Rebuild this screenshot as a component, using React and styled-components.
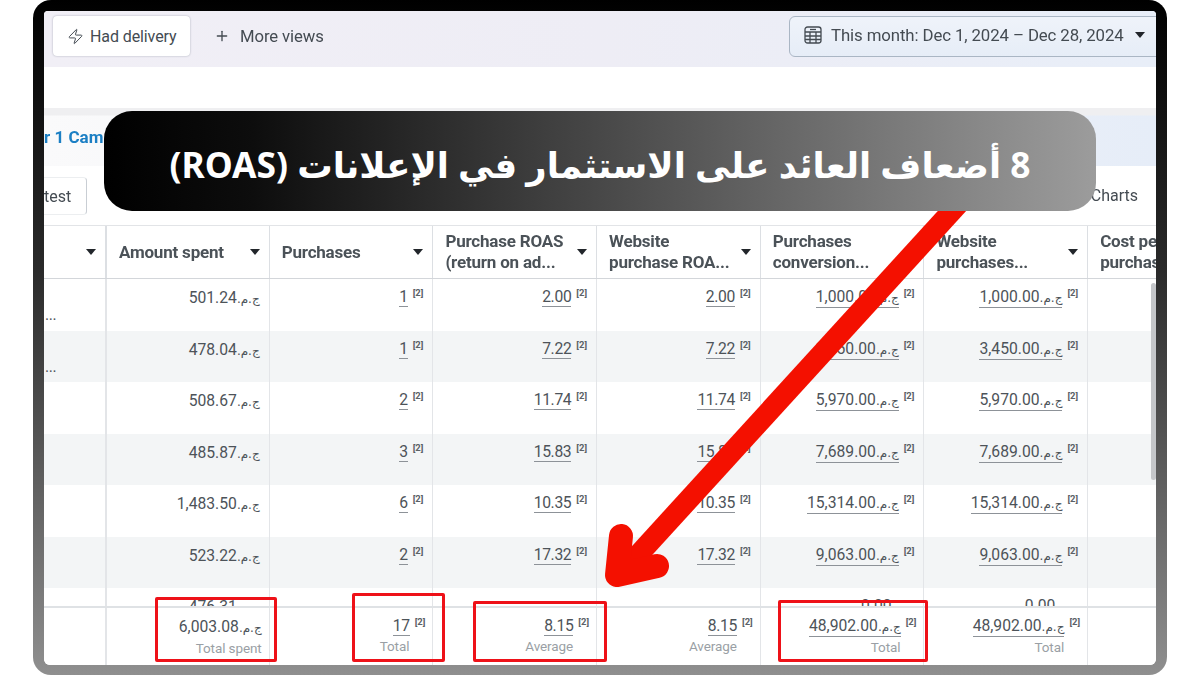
import React from "react";
import styled, { createGlobalStyle } from "styled-components";
import { Plus, Zap } from "lucide-react";

const Global = createGlobalStyle`
  html, body { margin: 0; padding: 0; background: #fff; }
  body { font-family: "Roboto", "Liberation Sans", sans-serif; }
  #root { width: 1200px; height: 675px; overflow: hidden; }
`;

const Stage = styled.div`
  position: relative;
  width: 1200px;
  height: 675px;
  padding: 0 33px;
  box-sizing: border-box;
  background: #fff;
`;
const Frame = styled.div`
  height: 675px;
  box-sizing: border-box;
  padding: 11px 11px 10px;
  border-radius: 18px;
  background: linear-gradient(180deg, #000 0%, #2a2a2a 40%, #8f8f8f 100%);
`;
const Screen = styled.div`
  height: 654px;
  display: flex;
  flex-direction: column;
  overflow: hidden;
  background: #fff;
  border-radius: 4px 4px 6px 6px;
  filter: blur(0.45px);
  color: #444b52;
`;
const Toolbar = styled.div`
  height: 56px;
  flex: none;
  display: flex;
  align-items: center;
  padding: 0 0 6px 9px;
  box-sizing: border-box;
  background: linear-gradient(90deg, #f1eff6 0%, #eeedf5 50%, #e8eef8 100%);
  font-size: 16px;
  letter-spacing: -0.1px;
`;
const ViewButton = styled.div`
  width: 137px;
  height: 40px;
  box-sizing: border-box;
  display: flex;
  align-items: center;
  gap: 6px;
  padding-left: 14px;
  background: #fff;
  border-radius: 4px;
  box-shadow: 0 0 2px rgba(70, 80, 100, 0.45);
`;
const MoreViews = styled.div`
  display: flex;
  align-items: center;
  gap: 10px;
  margin-left: 24px;
  font-size: 16.700px;
`;
const DateButton = styled.div`
  margin-left: auto;
  margin-right: -12px;
  width: 379px;
  height: 41px;
  box-sizing: border-box;
  display: flex;
  align-items: center;
  gap: 9px;
  padding: 0 0 3px 14px;
  border: 1px solid #aab6c4;
  border-radius: 6px;
  background: linear-gradient(180deg, #eff3fa, #e6edf7);
  white-space: nowrap;
  font-size: 16.800px;
`;
const Caret = styled.span`
  display: inline-block;
  flex: none;
  width: 0;
  height: 0;
  border-left: 5px solid transparent;
  border-right: 5px solid transparent;
  border-top: 6px solid #22262b;
`;
const DateCaret = styled(Caret)`
  margin-left: 2px;
`;
const Spacer = styled.div`
  height: 41px;
  flex: none;
`;
const AccountBand = styled.div`
  height: 58px;
  flex: none;
  display: flex;
  align-items: center;
  background: linear-gradient(180deg, #efeff1 0, #efeff1 7px, transparent 8px),
    linear-gradient(90deg, #fafafb 0%, #f0f2f6 50%, #e6edf8 100%);
  color: #1b7fc4;
  font-size: 17px;
  font-weight: 700;
  white-space: nowrap;
  overflow: hidden;
`;
const TabsRow = styled.div`
  height: 59px;
  flex: none;
  display: flex;
  align-items: center;
  justify-content: space-between;
  padding-right: 18px;
  font-size: 16px;
`;
const TestTab = styled.div`
  width: 43px;
  height: 38px;
  line-height: 38px;
  box-sizing: border-box;
  border: 1px solid #eceef0;
  border-right-color: #c9ced4;
  border-left: 0;
  border-radius: 0 4px 4px 0;
`;
const Grid = styled.div`
  display: grid;
  grid-template-columns: 61px repeat(6, 163.700px) 1fr;
`;
const HeadRow = styled(Grid)`
  height: 54px;
  flex: none;
  border-top: 1px solid #e2e4e7;
  border-bottom: 1px solid #d3d6da;
  box-sizing: border-box;
`;
const HeadCell = styled.div`
  display: flex;
  align-items: center;
  justify-content: space-between;
  padding: 0 9px 0 12px;
  border-left: ${(p) => (p.$strong ? "2px" : "1px")} solid #dcdfe3;
  font-size: 17px;
  font-weight: 700;
  line-height: 21px;
  color: #4b5258;
  letter-spacing: -0.2px;
  white-space: pre-line;
  overflow: hidden;
  min-width: 0;
  &:first-child { border-left: 0; justify-content: flex-end; }
`;
const Rows = styled.div`
  flex: 1;
  min-height: 0;
  overflow: hidden;
`;
const Row = styled(Grid)`
  height: 51.500px;
  background: ${(p) => (p.$alt ? "#f3f5f6" : "#fff")};
`;
const Cell = styled.div`
  box-sizing: border-box;
  padding: 9px 9px 0 0;
  display: flex;
  justify-content: flex-end;
  align-items: flex-start;
  border-left: ${(p) => (p.$strong ? "2px" : "1px")} solid #e3e5e8;
  font-size: 15.700px;
  line-height: 20px;
  letter-spacing: -0.35px;
  color: #4d5359;
  &:first-child { border-left: 0; }
`;
const DotsCell = styled(Cell)`
  justify-content: flex-start;
  padding: 26px 0 0 1px;
`;
const Linked = styled.span`
  border-bottom: 1px solid #8d9298;
  line-height: 18px;
`;
const Cur = styled.span`
  font-family: "DejaVu Sans", sans-serif;
  font-size: 12px;
  letter-spacing: -0.4px;
  direction: rtl;
  unicode-bidi: isolate;
`;
const Note = styled.sup`
  font-size: 9.500px;
  line-height: 10px;
  margin-left: 5px;
  font-weight: 700;
  color: #5b6167;
  vertical-align: top;
  letter-spacing: 0;
`;
const Footer = styled(Grid)`
  height: 59px;
  flex: none;
  border-top: 2px solid #dfe2e5;
  box-sizing: border-box;
  background: #fff;
`;
const FootCell = styled.div`
  box-sizing: border-box;
  padding: 9px 7px 0 0;
  display: flex;
  flex-direction: column;
  align-items: flex-end;
  border-left: ${(p) => (p.$strong ? "2px" : "1px")} solid #e3e5e8;
  font-size: 15.700px;
  line-height: 20px;
  letter-spacing: -0.35px;
  color: #4d5359;
  &:first-child { border-left: 0; }
`;
const FootValue = styled.div`
  display: flex;
  align-items: flex-start;
`;
const FootLabel = styled.div`
  margin: 1px ${(p) => (p.$flush ? "0" : "16px")} 0 0;
  font-size: 13.500px;
  line-height: 18px;
  color: #9a9fa5;
  letter-spacing: -0.1px;
`;
const Scrollbar = styled.div`
  position: absolute;
  left: 1151px;
  top: 283px;
  width: 5px;
  height: 197px;
  border-radius: 3px;
  background: #c4c6c9;
`;
const ArrowLayer = styled.svg`
  position: absolute;
  inset: 0;
  width: 1200px;
  height: 675px;
  pointer-events: none;
`;
const Banner = styled.div`
  position: absolute;
  left: 104px;
  top: 111px;
  width: 992px;
  height: 100px;
  box-sizing: border-box;
  padding-top: 6px;
  border-radius: 28px;
  display: flex;
  align-items: center;
  justify-content: center;
  background: linear-gradient(90deg, #000 0%, #0d0d0d 15%, #9c9c9c 100%);
  color: #fff;
  font-family: "Noto Sans", "DejaVu Sans", sans-serif;
  font-size: 35.400px;
  font-weight: 700;
  direction: rtl;
  white-space: nowrap;
`;
const Highlight = styled.div`
  position: absolute;
  box-sizing: border-box;
  left: ${(p) => p.$x}px;
  top: ${(p) => p.$y}px;
  width: ${(p) => p.$w}px;
  height: ${(p) => p.$h}px;
  border: 3px solid #ee1118;
  border-radius: 2px;
`;

const CalendarIcon = () => (
  <svg width="18" height="18" viewBox="0 0 18 18" fill="none" stroke="#444b52" strokeWidth="1.3">
    <rect x="1" y="1" width="16" height="16" rx="2.500" />
    <path d="M1 6h16M1 10h16M1 13.500h16M6 6v11M12 6v11" />
    <path d="M6 3.500h6" />
  </svg>
);

const rows = [
  ["501.24", "1", "2.00", "2.00", "1,000.00", "1,000.00"],
  ["478.04", "1", "7.22", "7.22", "3,450.00", "3,450.00"],
  ["508.67", "2", "11.74", "11.74", "5,970.00", "5,970.00"],
  ["485.87", "3", "15.83", "15.83", "7,689.00", "7,689.00"],
  ["1,483.50", "6", "10.35", "10.35", "15,314.00", "15,314.00"],
  ["523.22", "2", "17.32", "17.32", "9,063.00", "9,063.00"],
  ["476.31", "", "", "", "0.00", "0.00"],
];

const heads = [
  "Amount spent",
  "Purchases",
  "Purchase ROAS\n(return on ad...",
  "Website\npurchase ROA...",
  "Purchases\nconversion...",
  "Website\npurchases...",
];

const Money = ({ v }) => (
  <span dir="ltr">
    {v}
    <Cur>ج.م.</Cur>
  </span>
);

const foot = [
  ["6,003.08", "Total spent", true],
  ["17", "Total"],
  ["8.15", "Average"],
  ["8.15", "Average"],
  ["48,902.00", "Total", true],
  ["48,902.00", "Total", true],
];

export default function App() {
  return (
    <Stage>
      <Global />
      <Frame>
        <Screen>
          <Toolbar>
            <ViewButton>
              <Zap size={17} strokeWidth={1.4} />
              Had delivery
            </ViewButton>
            <MoreViews>
              <Plus size={16} strokeWidth={2} />
              More views
            </MoreViews>
            <DateButton>
              <CalendarIcon />
              This month: Dec 1, 2024 – Dec 28, 2024
              <DateCaret />
            </DateButton>
          </Toolbar>
          <Spacer />
          <AccountBand>r 1 Cam</AccountBand>
          <TabsRow>
            <TestTab>test</TestTab>
            <span>Charts</span>
          </TabsRow>
          <HeadRow>
            <HeadCell><Caret /></HeadCell>
            {heads.map((h, i) => (
              <HeadCell key={h} $strong={i === 0}>
                <span>{h}</span>
                <Caret />
              </HeadCell>
            ))}
            <HeadCell>{"Cost per\npurchase"}</HeadCell>
          </HeadRow>
          <Rows>
            {rows.map((r, i) => (
              <Row key={i} $alt={i % 2 === 1}>
                <DotsCell>{i < 2 ? "..." : ""}</DotsCell>
                {r.map((v, c) => (
                  <Cell key={c} $strong={c === 0}>
                    {c === 0 ? (
                      <Money v={v} />
                    ) : v === "" ? null : c >= 4 ? (
                      <>
                        <Linked><Money v={v} /></Linked>
                        {i < 6 && <Note>[2]</Note>}
                      </>
                    ) : (
                      <>
                        <Linked>{v}</Linked>
                        <Note>[2]</Note>
                      </>
                    )}
                  </Cell>
                ))}
                <Cell />
              </Row>
            ))}
          </Rows>
          <Footer>
            <FootCell />
            {foot.map(([v, l, m], i) => (
              <FootCell key={i} $strong={i === 0}>
                <FootValue>
                  {i === 0 ? (
                    <Money v={v} />
                  ) : (
                    <>
                      <Linked>{m ? <Money v={v} /> : v}</Linked>
                      <Note>[2]</Note>
                    </>
                  )}
                </FootValue>
                <FootLabel $flush={i === 0}>{l}</FootLabel>
              </FootCell>
            ))}
            <FootCell />
          </Footer>
        </Screen>
      </Frame>
      <Scrollbar />
      <Highlight $x={155} $y={597} $w={122} $h={65} />
      <Highlight $x={352} $y={593} $w={93} $h={69} />
      <Highlight $x={473} $y={601} $w={134} $h={61} />
      <Highlight $x={778} $y={600} $w={150} $h={62} />
      <ArrowLayer viewBox="0 0 1200 675">
        <path d="M962 200L628 566" stroke="#f41000" strokeWidth="21" fill="none" />
        <path d="M621 536L617 575L657 566" stroke="#f41000" strokeWidth="24" fill="none" strokeLinecap="round" strokeLinejoin="round" />
      </ArrowLayer>
      <Banner>8 أضعاف العائد على الاستثمار في الإعلانات (ROAS)</Banner>
    </Stage>
  );
}
